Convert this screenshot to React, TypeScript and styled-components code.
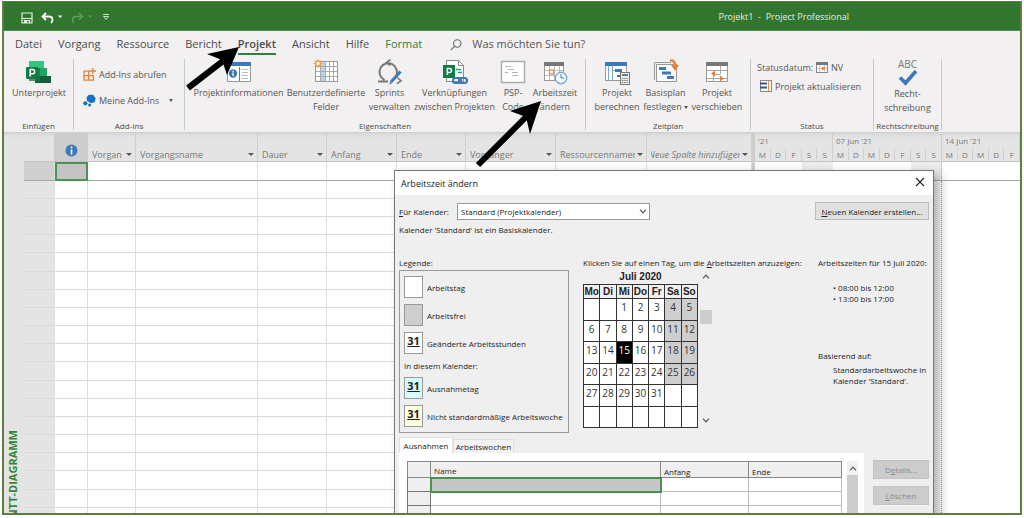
import React from 'react';
import styled, { createGlobalStyle } from 'styled-components';

const Global = createGlobalStyle`
  * { box-sizing: border-box; }
  body { margin: 0; background: #fff; overflow: hidden; font-family: "Open Sans", "Noto Sans", sans-serif; }
  button, input, select { font: inherit; color: inherit; }
  button { padding: 0; border: 0; background: none; }
`;

const Page = styled.div`
  height: 100vh;
  padding: 1px 2px 3px;
`;
const Window = styled.div`
  position: relative;
  display: flex;
  flex-direction: column;
  height: 100%;
  overflow: hidden;
  border: 2px solid #5f7d3e;
  border-top-width: 1px;
  background: #fff;
`;

/* Title bar */
const TitleBar = styled.header`
  display: flex;
  align-items: center;
  flex: none;
  height: 29px;
  padding: 0 171px 0 17px;
  background: #31752f;
  color: #e4f0e3;
  border-bottom: 1px solid #4f9150;
`;
const QuickTools = styled.div`
  display: flex;
  align-items: center;
  gap: 7px;
  padding-top: 3px;
  button { display: flex; }
`;
const WindowTitle = styled.div`
  margin-left: auto;
  font-size: 9px;
  white-space: pre;
`;

/* Ribbon */
const TabBar = styled.nav`
  display: flex;
  align-items: center;
  flex: none;
  gap: 16px;
  height: 27px;
  padding-left: 11px;
  background: #f2f0f0;
`;
const RibbonTab = styled.button<{ $active?: boolean; $green?: boolean }>`
  height: 20px;
  line-height: 18px;
  font-size: 11px;
  white-space: nowrap;
  font-weight: ${p => (p.$active ? 600 : 400)};
  color: ${p => (p.$green ? '#2f8032' : '#4c4c4c')};
  border-bottom: 2px solid ${p => (p.$active ? '#31803a' : 'transparent')};
`;
const Search = styled.label`
  display: flex;
  align-items: center;
  gap: 10px;
  margin-left: 12px;
`;
const SearchInput = styled.input`
  width: 160px;
  height: 20px;
  padding: 0 0 2px;
  border: 0;
  outline: 0;
  background: none;
  font-size: 11px;
  line-height: 16px;
  &::placeholder { color: #555; opacity: 1; }
`;
const Ribbon = styled.div`
  display: flex;
  flex: none;
  height: 75px;
  padding: 1px 0 2px;
  background: #f2f0f0;
  border-bottom: 1px solid #cfcfcf;
`;
const Group = styled.section<{ $w: number }>`
  display: flex;
  flex-direction: column;
  flex: none;
  width: ${p => p.$w}px;
  border-right: 1px solid #c9c9c9;
`;
const GroupBody = styled.div<{ $pad?: number }>`
  display: flex;
  flex: 1;
  align-items: flex-start;
  padding-left: ${p => p.$pad ?? 0}px;
`;
const GroupLabel = styled.div`
  font-size: 8px;
  line-height: 8px;
  text-align: center;
  white-space: nowrap;
  color: #484848;
`;
const BigButton = styled.button<{ $w: number }>`
  display: flex;
  flex-direction: column;
  align-items: center;
  flex: none;
  width: ${p => p.$w}px;
  font-size: 9px;
  line-height: 14px;
  white-space: nowrap;
  color: #555;
  svg { margin-bottom: 1px; }
`;
const Abc = styled.span`
  font-size: 10px;
  line-height: 11px;
  color: #777;
`;
const SmallStack = styled.div<{ $gap: number; $pad: number }>`
  display: flex;
  flex-direction: column;
  align-items: flex-start;
  gap: ${p => p.$gap}px;
  padding: ${p => p.$pad}px 0 0 6px;
`;
const SmallButton = styled.button<{ $indent?: number }>`
  display: flex;
  align-items: center;
  gap: 3px;
  height: 14px;
  margin-left: ${p => p.$indent ?? 0}px;
  font-size: 9px;
  white-space: nowrap;
  color: #555;
`;
const Caret = styled.span<{ $left?: number }>`
  display: inline-block;
  flex: none;
  margin-left: ${p => p.$left ?? 2}px;
  border: 2px solid transparent;
  border-top: 3px solid #555;
  border-bottom: 0;
  vertical-align: middle;
`;

/* Sheet */
const Sheet = styled.main`
  display: flex;
  flex: 1;
  min-height: 0;
  overflow: hidden;
  background: linear-gradient(#d8d8d8, #e4e4e4 5px);
`;
const SideStrip = styled.div`
  flex: none;
  width: 20px;
  padding-top: 297px;
`;
const SideLabel = styled.div`
  width: 18px;
  line-height: 18px;
  font-size: 11px;
  font-weight: 700;
  white-space: nowrap;
  color: #2f8a35;
  writing-mode: vertical-rl;
  transform: rotate(180deg);
`;
const TaskTable = styled.table`
  flex: none;
  width: 728px;
  height: max-content;
  table-layout: fixed;
  border-collapse: separate;
  border-spacing: 0;
`;
const ColumnHead = styled.th<{ $dark?: boolean; $italic?: boolean }>`
  height: 29px;
  padding: ${p => (p.$dark ? '6px 3px 0 4px' : '0 3px 0 4px')};
  vertical-align: ${p => (p.$dark ? 'middle' : 'bottom')};
  border-right: 1px solid #cfcfcf;
  border-bottom: 1px solid #c4c4c4;
  background: ${p => (p.$dark ? '#cdcdcd' : 'transparent')};
  font-size: 9px;
  font-weight: 400;
  font-style: ${p => (p.$italic ? 'italic' : 'normal')};
  color: #777;
  text-align: left;
  > svg { display: block; }
`;
const HeadInner = styled.div<{ $center?: boolean }>`
  display: flex;
  align-items: center;
  height: 14px;
  > div {
    display: flex;
    flex: 1;
    min-width: 0;
    justify-content: ${p => (p.$center ? 'center' : 'flex-start')};
    overflow: hidden;
    white-space: nowrap;
  }
`;
const HeadArrow = styled.span`
  flex: none;
  margin-left: 2px;
  border: 3px solid transparent;
  border-top: 3px solid #555;
  border-bottom: 0;
`;
const Row = styled.tr<{ $first?: boolean }>`
  td {
    height: ${p => (p.$first ? 19 : 18)}px;
    padding: 0;
    background: #fff;
    border-right: 1px solid #dedede;
    border-bottom: 1px solid ${p => (p.$first ? '#a9a9a9' : '#dadada')};
  }
  &:nth-child(6n) td { height: 19px; }
  td:first-child { background: ${p => (p.$first ? '#cfcfcf' : '#e4e4e4')}; }
  td:nth-child(2) {
    ${p => p.$first && 'background: #c4c4c4; border: 2px solid #4b9150;'}
  }
`;
const Splitter = styled.div`
  flex: none;
  width: 3px;
  background: #cdcdcd;
`;
const Gantt = styled.div`
  display: grid;
  flex: 1;
  min-width: 0;
  grid-template-columns: repeat(17, 1fr);
  grid-template-rows: 15px 14px 19px 1fr;
`;
const Week = styled.div<{ $span: number }>`
  grid-column: span ${p => p.$span};
  padding-left: 3px;
  font-size: 8px;
  line-height: 16px;
  white-space: nowrap;
  color: #777;
  border-right: 1px solid #cfcfcf;
`;
const Day = styled.div`
  font-size: 8px;
  line-height: 13px;
  text-align: center;
  color: #777;
  border-right: 1px solid #cfcfcf;
  border-bottom: 1px solid #c4c4c4;
`;
const Slot = styled.div<{ $off?: boolean; $first?: boolean; $mark?: boolean }>`
  background: ${p => (p.$off ? '#ededed' : '#fff')};
  border-bottom: ${p => (p.$first ? '1px solid #a9a9a9' : '0')};
  border-right: ${p => (p.$mark ? '1px dotted #aaa' : '0')};
`;

/* Dialog floating over the sheet */
const Dialog = styled.div`
  position: absolute;
  left: 390px;
  top: 168px;
  width: 540px;
  height: 460px;
  border: 1px solid #777;
  background: #efefef;
  box-shadow: 6px 4px 10px rgba(0, 0, 0, 0.3);
  font-size: 8px;
  line-height: 11px;
  color: #222;
`;
const DialogTitle = styled.div`
  display: flex;
  align-items: center;
  justify-content: space-between;
  height: 24px;
  padding: 0 8px 0 6px;
  background: #fff;
  font-size: 9px;
`;
const DialogBody = styled.div`
  padding: 7px 4px 0 4px;
`;
const TopRow = styled.div`
  display: flex;
  align-items: center;
  height: 18px;
  white-space: nowrap;
`;
const CalendarLabel = styled.label`
  width: 58px;
`;
const SelectWrap = styled.div`
  position: relative;
  width: 193px;
  svg { position: absolute; right: 3px; top: 6px; pointer-events: none; }
`;
const Select = styled.select`
  display: block;
  appearance: none;
  width: 100%;
  height: 17px;
  padding: 0 3px;
  border: 1px solid #999;
  border-radius: 0;
  background: #fff;
`;
const NewButton = styled.button`
  width: 114px;
  height: 18px;
  margin-left: auto;
  border: 1px solid #bcbcbc;
  background: #e0e0e0;
`;
const BaseInfo = styled.p`
  margin: 4px 0 22px;
`;
const Columns = styled.div`
  display: grid;
  grid-template-columns: 184px 235px 1fr;
  height: 180px;
  white-space: nowrap;
`;
const LegendBox = styled.div`
  display: flex;
  flex-direction: column;
  gap: 6px;
  width: 170px;
  height: 163px;
  margin-top: 2px;
  padding: 5px 4px;
  border: 1px solid #999;
`;
const LegendRow = styled.div`
  display: flex;
  align-items: center;
  gap: 4px;
`;
const Swatch = styled.span<{ $bg: string }>`
  width: 19px;
  height: 22px;
  border: 1px solid #999;
  background: ${p => p.$bg};
  font: bold 11px/16px "Open Sans", sans-serif;
  text-align: center;
  text-decoration: underline;
`;
const MonthArea = styled.div`
  display: flex;
  align-items: flex-start;
  gap: 2px;
  margin-top: 1px;
`;
const Month = styled.table`
  width: 115px;
  table-layout: fixed;
  border-collapse: collapse;
  caption {
    height: 15px;
    font: bold 10px/15px "Liberation Sans", sans-serif;
  }
  th {
    height: 14px;
    padding: 0;
    border: 1px solid #333;
    font: bold 10px/13px "Liberation Sans", sans-serif;
  }
`;
const WeekRow = styled.tr<{ $tall?: boolean }>`
  height: ${p => (p.$tall ? 22 : 21)}px;
`;
const DayCell = styled.td<{ $off?: boolean; $sel?: boolean }>`
  padding: 0;
  border: 1px solid #333;
  background: ${p => (p.$sel ? '#000' : p.$off ? '#cecece' : '#fff')};
  color: ${p => (p.$sel ? '#fff' : '#333')};
  font-size: 10px;
  line-height: 16px;
  text-align: center;
  vertical-align: top;
`;
const MonthScroll = styled.div`
  display: flex;
  flex-direction: column;
  align-items: center;
  width: 12px;
  height: 158px;
  padding: 5px 0 4px;
`;
const MonthThumb = styled.span`
  width: 12px;
  height: 14px;
  margin: 31px 0 auto;
  background: #cdcdcd;
`;
const Times = styled.ul`
  height: 50px;
  margin: 14px 0 18px;
  padding: 0 0 0 15px;
  list-style: none;
`;
const BaseName = styled.p`
  margin: 3px 0 0 15px;
`;
const DialogTabs = styled.div`
  display: flex;
  align-items: flex-end;
  height: 16px;
`;
const DialogTab = styled.button<{ $active?: boolean }>`
  width: ${p => (p.$active ? 54 : 61)}px;
  height: ${p => (p.$active ? 16 : 14)}px;
  border: 1px solid #e0e0e0;
  border-bottom: 0;
  background: ${p => (p.$active ? '#fff' : '#f2f2f2')};
  white-space: nowrap;
`;
const Lower = styled.div`
  display: flex;
  justify-content: space-between;
`;
const TabPanel = styled.div`
  display: flex;
  gap: 5px;
  width: 465px;
  height: 180px;
  padding: 8px 6px 0 8px;
  background: #fff;
`;
const ExceptionTable = styled.table`
  width: 434px;
  height: max-content;
  table-layout: fixed;
  border-collapse: collapse;
  th {
    height: 16px;
    padding: 3px 3px 0;
    border: 1px solid #888;
    background: #efefef;
    font-weight: 400;
    text-align: left;
    line-height: 11px;
  }
  td {
    height: 14px;
    padding: 0;
    border: 1px solid #bdbdbd;
  }
  td:first-child { background: #efefef; border-color: #777; }
  td.selected { background: #c6c6c6; border: 2px solid #4b9150; }
`;
const TableScroll = styled.div`
  display: flex;
  flex-direction: column;
  align-items: center;
  gap: 4px;
  width: 12px;
  padding-top: 5px;
  background: #f1f1f1;
  span { width: 11px; flex: 1; background: #cdcdcd; }
`;
const Actions = styled.div`
  display: flex;
  flex-direction: column;
  gap: 7px;
  padding-top: 7px;
`;
const Action = styled.button`
  width: 56px;
  height: 19px;
  border: 1px solid #c4c4c4;
  background: #cccccc;
  color: #8a8a8a;
`;
const Arrows = styled.svg`
  position: absolute;
  left: 0;
  top: 0;
  pointer-events: none;
`;

const Chevron = ({ dir, size = 8 }: { dir: 'up' | 'down'; size?: number }) => (
  <svg width={size} height="5" viewBox="0 0 8 5" fill="none" stroke="#555" strokeWidth="1.2">
    <path d={dir === 'up' ? 'M1 4.3 4 1.2l3 3.1' : 'M1 .7 4 3.8 7 .7'} />
  </svg>
);

const SubprojectIcon = () => (
  <svg width="26" height="26" viewBox="0 0 26 26">
    <path d="M3 2h15v7H3z" fill="#33c481" />
    <path d="M10 9h11v8H10z" fill="#21a366" />
    <path d="M9 17h16v7H9z" fill="#185c37" />
    <path d="M3 9h11v13H3z" fill="#107c41" opacity=".75" />
    <rect x="0" y="8" width="12" height="12" rx="1" fill="#107c41" />
    <path d="M4.2 17.5v-7h2.3a2 2 0 0 1 0 4.3H4.2" fill="none" stroke="#fff" strokeWidth="1.5" />
  </svg>
);
const InfoSheetIcon = () => (
  <svg width="26" height="26" viewBox="0 0 26 26">
    <rect x="1.5" y="3.5" width="23" height="19" fill="#fff" stroke="#9a9a9a" />
    <path d="M1 3h24v4H1z" fill="#3f78b8" />
    <circle cx="7" cy="14.500" r="4.200" fill="#3f78b8" />
    <path d="M7 13.500v3.500M7 11.500v1.200" stroke="#fff" strokeWidth="1.300" />
    <path d="M13.500 8v14" stroke="#777" />
    <path d="M15.500 10.500H22M15.500 13.500H22M15.500 16.500H22M15.500 19.500H22" stroke="#bbb" />
  </svg>
);
const FieldsIcon = () => (
  <svg width="26" height="26" viewBox="0 0 26 26">
    <rect x="2.500" y="2.500" width="22" height="20" fill="#fff" stroke="#999" />
    <path d="M8 3h4v19H8z" fill="#b9d3ea" />
    <path d="M7.500 3v19M12.500 3v19M16.500 3v19M20.500 3v19M3 7.500h21M3 12.500h21M3 17.500h21" stroke="#aaa" />
    <circle cx="5" cy="4.500" r="2.500" fill="#fff3dd" stroke="#e8a255" strokeWidth="1.400" />
    <path d="M5 0v1.500M5 7.500V9M.5 4.500H2M8 4.500h1.500M1.800 1.300l1 1M7.200 6.700l1 1M8.200 1.300l-1 1M2.800 6.700l-1 1" stroke="#e8a255" />
  </svg>
);
const SprintIcon = () => (
  <svg width="26" height="26" viewBox="0 0 26 26" fill="none">
    <path d="M1 22.500h10M7.500 21A8.800 8.800 0 1 1 18.500 18" stroke="#777" strokeWidth="2" />
    <path d="m13.500.5-4 3 4 3" stroke="#777" strokeWidth="1.600" />
    <path d="m20 18.500 4 3.200-4 3" stroke="#777" strokeWidth="1.600" />
    <path d="m14 23 9.500-10.500" stroke="#3f78b8" strokeWidth="3" />
    <path d="m12.500 25.500.5-3 2.200 1.800z" fill="#3f78b8" />
  </svg>
);
const LinksIcon = () => (
  <svg width="28" height="26" viewBox="0 0 28 26">
    <path d="M5.500 1.500h12l5 5v16h-17z" fill="#fff" stroke="#888" />
    <path d="M17.500 1.500v5h5" fill="none" stroke="#888" />
    <path d="M15 10.500h5M17 13.500h4" stroke="#21a366" strokeWidth="1.400" />
    <rect x="2" y="6" width="12" height="13" fill="#107c41" />
    <path d="M6.300 16V9.500h2.200a2 2 0 0 1 0 4H6.300" fill="none" stroke="#fff" strokeWidth="1.500" />
    <g fill="none" stroke="#3f78b8" strokeWidth="2.200"><rect x="12" y="19" width="8" height="5" rx="2.500" /><rect x="18" y="19" width="8" height="5" rx="2.500" /></g>
  </svg>
);
const PspIcon = () => (
  <svg width="26" height="26" viewBox="0 0 26 26">
    <rect x="1.500" y="2.500" width="23" height="21" fill="#fff" stroke="#aaa" strokeWidth="1.400" />
    <path d="M5 7.500h6M8 10.500h6M12 13.500h6M12 16.500h6M5 13.500h3" stroke="#b5b5b5" />
  </svg>
);
const WorkTimeIcon = () => (
  <svg width="26" height="26" viewBox="0 0 26 26">
    <rect x="2.500" y="3.500" width="19" height="18" fill="#fff" stroke="#999" />
    <path d="M2 3h20v4H2z" fill="#777" />
    <path d="M7.500 7v14M12.500 7v14M17.500 7v14M3 11.500h18M3 16.500h18" stroke="#bbb" />
    <rect x="7.500" y="11" width="4" height="4" fill="#fff" stroke="#ea8c43" strokeWidth="1.300" />
    <circle cx="19" cy="19" r="5.700" fill="#f6fbff" stroke="#7fa8cf" strokeWidth="1.400" />
    <path d="M19 15v4h3" fill="none" stroke="#3f78b8" />
  </svg>
);
const CalculateIcon = () => (
  <svg width="26" height="26" viewBox="0 0 26 26">
    <rect x="1.500" y="3.500" width="21" height="18" fill="#fff" stroke="#999" />
    <path d="M1 3h22v4H1z" fill="#3f78b8" />
    <path d="M4.500 7v14M8.500 7v14" stroke="#7fa8cf" />
    <path d="M11 10h7v3h-7zM13 16h4v2h-4z" fill="#3f78b8" />
    <path d="M8 11.500h3M17 14.500h5" stroke="#7fa8cf" />
    <rect x="16.500" y="13.500" width="9" height="12" fill="#eee" stroke="#777" />
    <path d="M18 16h6" stroke="#777" strokeWidth="2" />
    <path d="M18 19.500h6M18 21.500h6M18 23.500h6" stroke="#777" strokeDasharray="1.400 .8" />
  </svg>
);
const BaselineIcon = () => (
  <svg width="26" height="26" viewBox="0 0 26 26">
    <path d="M1.500 21V3.500H18M4 23V6" fill="none" stroke="#999" />
    <rect x="3.500" y="5.500" width="20" height="17" fill="#fff" stroke="#999" />
    <path d="M6 8h7v3H6zM9 12.500h9v3H9zM14 17h7v3h-7z" fill="#3f78b8" />
    <path d="M17 1.500c3-.5 5 1 5 5" fill="none" stroke="#e57f35" strokeWidth="2.400" />
    <path d="m18 6 4 6 4-6z" fill="#e57f35" />
  </svg>
);
const MoveIcon = () => (
  <svg width="26" height="26" viewBox="0 0 26 26">
    <rect x="2.500" y="3.500" width="21" height="19" fill="#fff" stroke="#999" />
    <path d="M2 3h22v4H2z" fill="#777" />
    <path d="M3 11.500h20M3 19.500h20M9.500 15v7M16.500 7v8M9.500 15.500h7" fill="none" stroke="#aaa" />
    <path d="m7 14.500 4-3v6zM20 19.500l-4-3v6z" fill="#e57f35" />
  </svg>
);
const SpellIcon = () => (
  <svg width="26" height="16" viewBox="0 0 26 16" fill="none" stroke="#3f78b8" strokeWidth="3.600">
    <path d="m5 7.500 5.500 5.500L21 1" />
  </svg>
);
const SmallCalendar = () => (
  <svg width="12" height="11" viewBox="0 0 12 11">
    <rect x=".5" y=".5" width="11" height="10" fill="#fff" stroke="#888" />
    <path d="M0 0h12v3H0z" fill="#777" />
    <path d="M3.500 3v7M8.500 3v7M1 6.500h10" stroke="#ccc" />
    <path d="M6 5h3v3H6z" fill="#ea8c43" />
  </svg>
);
const UpdateIcon = () => (
  <svg width="13" height="12" viewBox="0 0 13 12">
    <rect x="1.500" y=".5" width="11" height="11" fill="#fff" stroke="#888" />
    <path d="M1 3.500h7M1 7.500h7" stroke="#32588c" strokeWidth="2" />
    <path d="M9.500 1v10" stroke="#ea8c43" strokeWidth="1.200" />
  </svg>
);
const GetAddinsIcon = () => (
  <svg width="13" height="13" viewBox="0 0 13 13" fill="none" stroke="#e5813a" strokeWidth="1.300">
    <path d="M7 3.200H1v9h9.500V7.500M1 7.700h9.500M5.700 3.200v9M9.800 0v6M7 3h6" />
  </svg>
);
const MyAddinsIcon = () => (
  <svg width="13" height="13" viewBox="0 0 13 13" fill="#1a6fc0">
    <path d="m6 .8 4-.1L12.600 4l-.8 4-3.500 1.200L4 7l-.4-3.700z" />
    <circle cx="2.300" cy="9.300" r="2.100" /><circle cx="6.600" cy="11" r="1.500" />
  </svg>
);

const columns = [
  { w: 48, label: 'Vorgan' },
  { w: 122, label: 'Vorgangsname' },
  { w: 69, label: 'Dauer' },
  { w: 70, label: 'Anfang' },
  { w: 69, label: 'Ende' },
  { w: 90, label: 'Vorgänger' },
  { w: 91, label: 'Ressourcennamen' },
  { w: 105, label: 'Neue Spalte hinzufügen', italic: true },
];
const days = 'MDFSSMDMDFSSMDMDF'.split('');
const weekdays = ['Mo', 'Di', 'Mi', 'Do', 'Fr', 'Sa', 'So'];

export default function App() {
  return (
    <Page>
      <Global />
      <Window>
        <TitleBar>
          <QuickTools>
            <button aria-label="Speichern">
              <svg width="12" height="12" viewBox="0 0 12 12" fill="none" stroke="#e4f0e3" strokeWidth="1.200">
                <path d="M1 1h10v10H1zM1 6.500h10M3.500 11V8.500h5V11" /><path d="M4 9h2v2H4z" fill="#e4f0e3" stroke="none" />
              </svg>
            </button>
            <button aria-label="Rückgängig">
              <svg width="24" height="12" viewBox="0 0 24 12" fill="none" stroke="#fff" strokeWidth="1.800">
                <path d="M6 1 2.500 4.500 6 8M2.500 4.500H9c4 0 4.500 4 2 6.500" /><path d="m18 3.500 2.200 2.500 2.200-2.500z" fill="#fff" stroke="none" />
              </svg>
            </button>
            <button aria-label="Wiederholen">
              <svg width="24" height="12" viewBox="0 0 24 12" fill="none" stroke="#5f9a5d" strokeWidth="1.600">
                <path d="m8 1 3.500 3.500L8 8M11.500 4.500H5c-4 0-4.500 4-2 6.500" /><path d="m17 3.500 2.200 2.500 2.200-2.500z" fill="#5f9a5d" stroke="none" />
              </svg>
            </button>
            <button aria-label="Symbolleiste anpassen">
              <svg width="8" height="7" viewBox="0 0 8 7" fill="none" stroke="#c6dfc4">
                <path d="M1 .5h6M1.500 2.500h5L4 5.500z" />
              </svg>
            </button>
          </QuickTools>
          <WindowTitle>{'Projekt1  -  Project Professional'}</WindowTitle>
        </TitleBar>

        <TabBar>
          <RibbonTab>Datei</RibbonTab>
          <RibbonTab>Vorgang</RibbonTab>
          <RibbonTab>Ressource</RibbonTab>
          <RibbonTab>Bericht</RibbonTab>
          <RibbonTab $active>Projekt</RibbonTab>
          <RibbonTab>Ansicht</RibbonTab>
          <RibbonTab>Hilfe</RibbonTab>
          <RibbonTab $green>Format</RibbonTab>
          <Search>
            <svg width="12" height="12" viewBox="0 0 12 12" fill="none" stroke="#666" strokeWidth="1.100">
              <circle cx="7.300" cy="4.500" r="3.700" /><path d="M4.700 7.200.8 11.200" />
            </svg>
            <SearchInput placeholder="Was möchten Sie tun?" />
          </Search>
        </TabBar>

        <Ribbon>
          <Group $w={70}>
            <GroupBody><BigButton $w={70}><SubprojectIcon />Unterprojekt</BigButton></GroupBody>
            <GroupLabel>Einfügen</GroupLabel>
          </Group>
          <Group $w={111}>
            <GroupBody $pad={3}>
              <SmallStack $gap={12} $pad={8}>
                <SmallButton><GetAddinsIcon />Add-Ins abrufen</SmallButton>
                <SmallButton><MyAddinsIcon />Meine Add-Ins<Caret $left={7} /></SmallButton>
              </SmallStack>
            </GroupBody>
            <GroupLabel>Add-Ins</GroupLabel>
          </Group>
          <Group $w={401}>
            <GroupBody $pad={7}>
              <BigButton $w={93}><InfoSheetIcon />Projektinformationen</BigButton>
              <BigButton $w={82}><FieldsIcon />Benutzerdefinierte<span>Felder</span></BigButton>
              <BigButton $w={45}><SprintIcon />Sprints<span>verwalten</span></BigButton>
              <BigButton $w={85}><LinksIcon />Verknüpfungen<span>zwischen Projekten</span></BigButton>
              <BigButton $w={32}><PspIcon />PSP-<span>Code</span></BigButton>
              <BigButton $w={52}><WorkTimeIcon />Arbeitszeit<span>ändern</span></BigButton>
            </GroupBody>
            <GroupLabel>Eigenschaften</GroupLabel>
          </Group>
          <Group $w={165}>
            <GroupBody $pad={7}>
              <BigButton $w={48}><CalculateIcon />Projekt<span>berechnen</span></BigButton>
              <BigButton $w={49}><BaselineIcon />Basisplan<span>festlegen<Caret /></span></BigButton>
              <BigButton $w={54}><MoveIcon />Projekt<span>verschieben</span></BigButton>
            </GroupBody>
            <GroupLabel>Zeitplan</GroupLabel>
          </Group>
          <Group $w={123}>
            <GroupBody>
              <SmallStack $gap={5} $pad={1}>
                <SmallButton>Statusdatum: <SmallCalendar /> NV</SmallButton>
                <SmallButton $indent={2}><UpdateIcon />Projekt aktualisieren</SmallButton>
              </SmallStack>
            </GroupBody>
            <GroupLabel>Status</GroupLabel>
          </Group>
          <Group $w={68}>
            <GroupBody>
              <BigButton $w={67}><Abc>ABC</Abc><SpellIcon />Recht-<span>schreibung</span></BigButton>
            </GroupBody>
            <GroupLabel>Rechtschreibung</GroupLabel>
          </Group>
        </Ribbon>

        <Sheet>
          <SideStrip><SideLabel>GANTT-DIAGRAMM</SideLabel></SideStrip>
          <TaskTable>
            <colgroup>
              <col width={31} />
              <col width={33} />
              {columns.map(c => <col key={c.label} width={c.w} />)}
            </colgroup>
            <thead>
              <tr>
                <ColumnHead />
                <ColumnHead $dark>
                  <svg width="25" height="13" viewBox="0 0 25 13">
                    <circle cx="12.500" cy="6.500" r="6" fill="#3f78b8" />
                    <path d="M12.500 5.500v5M12.500 2.500v1.800" stroke="#fff" strokeWidth="1.600" />
                  </svg>
                </ColumnHead>
                {columns.map(c => (
                  <ColumnHead key={c.label} $italic={c.italic}>
                    <HeadInner $center={c.italic}><div><span>{c.label}</span></div><HeadArrow /></HeadInner>
                  </ColumnHead>
                ))}
              </tr>
            </thead>
            <tbody>
              {Array.from({ length: 60 }, (_, r) => (
                <Row key={r} $first={r === 0}>
                  {Array.from({ length: 10 }, (_, c) => <td key={c} />)}
                </Row>
              ))}
            </tbody>
          </TaskTable>
          <Splitter />
          <Gantt>
            <Week $span={5}>'21</Week>
            <Week $span={7}>07 Jun '21</Week>
            <Week $span={5}>14 Jun '21</Week>
            {days.map((d, i) => <Day key={i}>{d}</Day>)}
            {days.map((d, i) => <Slot key={i} $first $off={d === 'S'} $mark={i === 11} />)}
            {days.map((d, i) => <Slot key={i} $off={d === 'S' && i < 10} $mark={i === 11} />)}
          </Gantt>
        </Sheet>

        <Dialog role="dialog" aria-label="Arbeitszeit ändern">
          <DialogTitle>
            Arbeitszeit ändern
            <button aria-label="Schließen">
              <svg width="10" height="10" viewBox="0 0 10 10" stroke="#222" strokeWidth="1.100"><path d="m1 1 8 8M9 1 1 9" /></svg>
            </button>
          </DialogTitle>
          <DialogBody>
            <TopRow>
              <CalendarLabel htmlFor="calendar"><u>F</u>ür Kalender:</CalendarLabel>
              <SelectWrap>
                <Select id="calendar"><option>Standard (Projektkalender)</option></Select>
                <Chevron dir="down" />
              </SelectWrap>
              <NewButton><u>N</u>euen Kalender erstellen...</NewButton>
            </TopRow>
            <BaseInfo>Kalender 'Standard' ist ein Basiskalender.</BaseInfo>
            <Columns>
              <div>
                Legende:
                <LegendBox>
                  <LegendRow><Swatch $bg="#fff" />Arbeitstag</LegendRow>
                  <LegendRow><Swatch $bg="#cecece" />Arbeitsfrei</LegendRow>
                  <LegendRow><Swatch $bg="#fff">31</Swatch>Geänderte Arbeitsstunden</LegendRow>
                  <div>In diesem Kalender:</div>
                  <LegendRow><Swatch $bg="#d5fbff">31</Swatch>Ausnahmetag</LegendRow>
                  <LegendRow><Swatch $bg="#ffffdb">31</Swatch>Nicht standardmäßige Arbeitswoche</LegendRow>
                </LegendBox>
              </div>
              <div>
                Klicken Sie auf einen Tag, um die <u>A</u>rbeitszeiten anzuzeigen:
                <MonthArea>
                  <Month>
                    <caption>Juli 2020</caption>
                    <thead><tr>{weekdays.map(d => <th key={d}>{d}</th>)}</tr></thead>
                    <tbody>
                      {[0, 1, 2, 3, 4, 5].map(w => (
                        <WeekRow key={w} $tall={w % 2 === 0}>
                          {weekdays.map((d, i) => {
                            const n = w * 7 + i - 1;
                            const shown = n >= 1 && n <= 31;
                            return <DayCell key={d} $off={shown && i > 4} $sel={n === 15}>{shown ? n : ''}</DayCell>;
                          })}
                        </WeekRow>
                      ))}
                    </tbody>
                  </Month>
                  <MonthScroll><Chevron dir="up" /><MonthThumb /><Chevron dir="down" /></MonthScroll>
                </MonthArea>
              </div>
              <div>
                Arbeitszeiten für 15 Juli 2020:
                <Times><li>• 08:00 bis 12:00</li><li>• 13:00 bis 17:00</li></Times>
                Basierend auf:
                <BaseName>Standardarbeitswoche in<br />Kalender 'Standard'.</BaseName>
              </div>
            </Columns>
            <DialogTabs>
              <DialogTab $active>Ausnahmen</DialogTab>
              <DialogTab>Arbeitswochen</DialogTab>
            </DialogTabs>
            <Lower>
              <TabPanel>
                <ExceptionTable>
                  <colgroup><col width={23} /><col width={230} /><col width={88} /><col width={93} /></colgroup>
                  <thead><tr><th /><th>Name</th><th>Anfang</th><th>Ende</th></tr></thead>
                  <tbody>
                    {Array.from({ length: 8 }, (_, r) => (
                      <tr key={r}><td /><td className={r === 0 ? 'selected' : undefined} /><td /><td /></tr>
                    ))}
                  </tbody>
                </ExceptionTable>
                <TableScroll><Chevron dir="up" /><span /></TableScroll>
              </TabPanel>
              <Actions>
                <Action disabled>D<u>e</u>tails...</Action>
                <Action disabled><u>L</u>öschen</Action>
              </Actions>
            </Lower>
          </DialogBody>
        </Dialog>

        <Arrows width="600" height="170" viewBox="0 0 600 170">
          <path d="m184 86 35-27M474 163l50-50" stroke="#000" strokeWidth="6" />
          <path d="m235 45-32 7 15 6 5 15zM537 99l-31 10 16 6 4 17z" />
        </Arrows>
      </Window>
    </Page>
  );
}
